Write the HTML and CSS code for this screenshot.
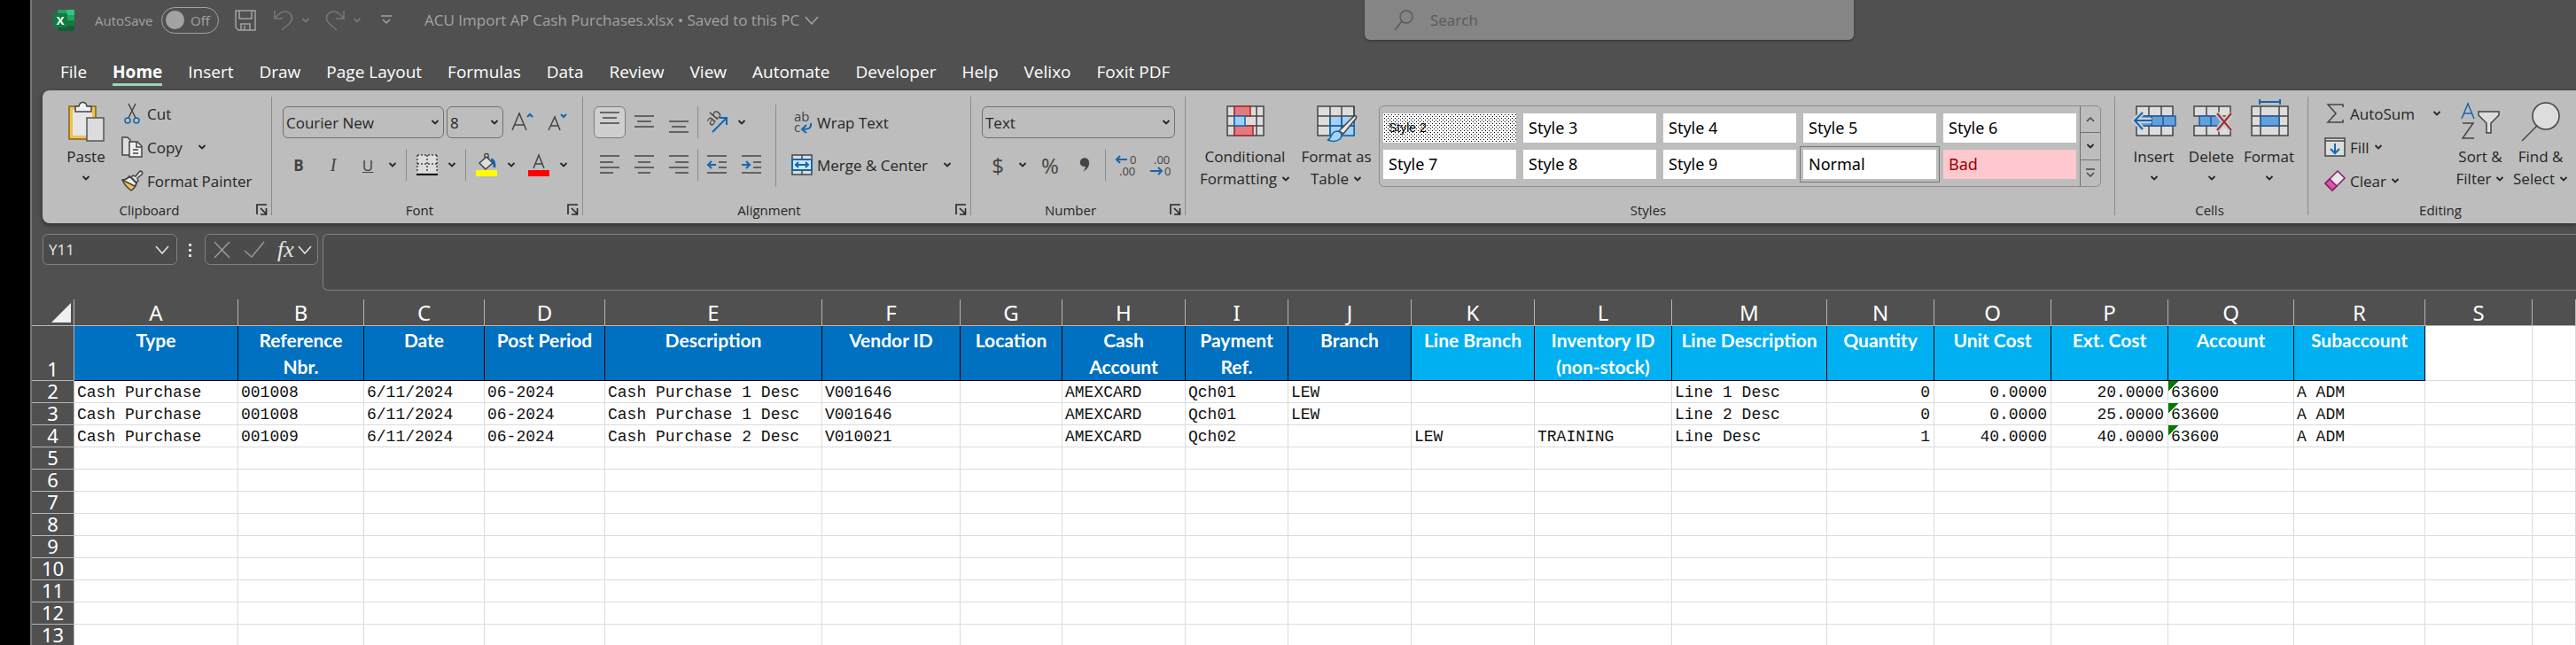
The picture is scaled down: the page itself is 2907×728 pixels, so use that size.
FILE: index.html
```html
<!DOCTYPE html>
<html lang="en">
<head>
    <meta charset="UTF-8">
    <meta name="viewport" content="width=device-width, initial-scale=1.0">
    <title>ACU Import AP Cash Purchases.xlsx</title>
    <link rel="stylesheet" href="styles.css">
</head>
<body>
    <!-- shared icons -->
    <svg class="defs" width="0" height="0">
        <symbol id="caret" viewBox="0 0 10 6"><path d="M1.5 1 5 4.5 8.5 1" fill="none" stroke="currentColor" stroke-width="1.8"/></symbol>
        <symbol id="chevron" viewBox="0 0 16 10"><path d="M1 1l7 8 7-8" fill="none" stroke="currentColor" stroke-width="1.5"/></symbol>
        <symbol id="launcher" viewBox="0 0 13 13"><path d="M1 12V1h11M5 5l6 6M11.500 5v7H5" fill="none" stroke="currentColor" stroke-width="1.6"/></symbol>
    </svg>

    <div class="app">
        <header class="titlebar">
            <div class="title-left">
                <svg class="logo" width="24" height="24" viewBox="0 0 24 24">
                    <path fill="#21a366" d="M5 0h10v6H5z"/><path fill="#33c481" d="M15 0h9v6h-9z"/>
                    <path fill="#107c41" d="M5 6h10v6H5z"/><path fill="#21a366" d="M15 6h9v6h-9z"/>
                    <path fill="#185c37" d="M5 12h10v12H5z"/><path fill="#107c41" d="M15 12h9v6h-9z"/><path fill="#185c37" d="M15 18h9v6h-9z"/>
                    <rect y="4" width="16" height="16" rx="1" fill="#107c41"/>
                    <text x="8" y="17" text-anchor="middle" font-size="13" font-weight="bold" fill="#fff">X</text>
                </svg>
                <label class="autosave" for="autosave">AutoSave</label>
                <span class="toggle"><input type="checkbox" id="autosave"><span>Off</span></span>
                <button class="qat save" title="Save">
                    <svg width="24" height="24" viewBox="0 0 24 24"><path d="M1 1h22v22H4l-3-3zM5 1v9h14V1M7 23v-7h10v7M11 18v5"/></svg>
                </button>
                <button class="qat dim" title="Undo">
                    <svg width="24" height="24" viewBox="0 0 24 24"><path d="M2 1v9h9M2 10C8 2 14 0 19 4c5 5 2 9-1 12l-8 7"/></svg>
                    <svg width="10" height="6"><use href="#caret"/></svg>
                </button>
                <button class="qat dim" title="Redo">
                    <svg width="24" height="24" viewBox="0 0 24 24"><path d="M22 1v9h-9M22 10C16 2 10 0 5 4c-5 5-2 9 1 12l8 7"/></svg>
                    <svg width="10" height="6"><use href="#caret"/></svg>
                </button>
                <button class="qat" title="Customize Quick Access Toolbar">
                    <svg width="12" height="12" viewBox="0 0 12 12"><path d="M0 1h12M2 5l4 4 4-4"/></svg>
                </button>
                <span class="doc-title">ACU Import AP Cash Purchases.xlsx • Saved to this PC <svg width="16" height="10"><use href="#chevron"/></svg></span>
            </div>
            <div class="search">
                <svg width="22" height="24" viewBox="0 0 22 24"><circle cx="14" cy="8" r="7"/><path d="M9 13l-8 10"/></svg>
                <input type="text" placeholder="Search" aria-label="Search">
            </div>
        </header>

        <nav class="tabs">
            <a href="#">File</a>
            <a href="#" class="active">Home</a>
            <a href="#">Insert</a>
            <a href="#">Draw</a>
            <a href="#">Page Layout</a>
            <a href="#">Formulas</a>
            <a href="#">Data</a>
            <a href="#">Review</a>
            <a href="#">View</a>
            <a href="#">Automate</a>
            <a href="#">Developer</a>
            <a href="#">Help</a>
            <a href="#">Velixo</a>
            <a href="#">Foxit PDF</a>
        </nav>

        <div class="ribbon">
            <section class="group clipboard">
                <div class="group-body">
                    <button class="big">
                        <svg width="44" height="46" viewBox="0 0 44 46">
                            <path d="M3 6h30v37H3z" fill="#f2c04f" stroke="#8a6410" stroke-width="1.5"/><path d="M7 10h22v29H7z" fill="#e6e6e6" stroke="none"/>
                            <path d="M10 12V6h4c1-6 8-6 9 0h5v6z" fill="#f0f0f0"/><path d="M23 19h19v26H23z" fill="#dcdcdc" stroke="#555"/>
                        </svg>
                        <span>Paste</span>
                        <svg class="caret" width="10" height="6"><use href="#caret"/></svg>
                    </button>
                    <div class="stack">
                        <button class="line">
                            <svg width="24" height="24" viewBox="0 0 24 24"><path d="M8 1l8 16M16 1L8 17"/><g stroke="#1267b0"><circle cx="7" cy="20" r="3"/><circle cx="17" cy="20" r="3"/></g></svg>
                            <span>Cut</span>
                        </button>
                        <button class="line">
                            <svg width="24" height="24" viewBox="0 0 24 24"><path d="M1 1h6l3 3v17H1z" fill="#ddd"/><path d="M9 6h9l5 5v12H9z" fill="#eee"/><path d="M17 6v6h6M13 15h6M13 19h6"/></svg>
                            <span>Copy</span>
                            <svg class="caret gap" width="10" height="6"><use href="#caret"/></svg>
                        </button>
                        <button class="line">
                            <svg width="24" height="24" viewBox="0 0 24 24"><path d="M1 11c4 0 6-1 8-4l8 8c-1 4-3 6-6 8-4-3-8-7-10-12z" fill="#f2c04f"/><path d="M1 11c4 0 6-1 8-4l8 8c-1 1-1 2-2 3z" fill="#eee"/><path d="M11 8l2-2 3 1 4-5c2-2 5 0 3 3l-5 4 1 3-2 2z" fill="#ddd"/></svg>
                            <span>Format Painter</span>
                        </button>
                    </div>
                </div>
                <footer><span>Clipboard</span><button title="Clipboard settings"><svg width="13" height="13"><use href="#launcher"/></svg></button></footer>
            </section>

            <section class="group font">
                <div class="group-body rows">
                    <div class="row">
                        <div class="combo name"><select aria-label="Font"><option>Courier New</option></select><svg width="10" height="6"><use href="#caret"/></svg></div>
                        <div class="combo size"><select aria-label="Font size"><option>8</option></select><svg width="10" height="6"><use href="#caret"/></svg></div>
                        <button class="tool" title="Increase font size"><svg width="26" height="26" viewBox="0 0 26 26"><path d="M2 22L10 3l8 19M5 16h10"/><path d="M19 7l3-3 3 3" stroke="#1267b0" stroke-width="2"/></svg></button>
                        <button class="tool" title="Decrease font size"><svg width="26" height="26" viewBox="0 0 26 26"><path d="M4 22l7-15 6 15M6 17h9"/><path d="M18 4l3 3 3-3" stroke="#1267b0" stroke-width="2"/></svg></button>
                    </div>
                    <div class="row">
                        <button class="tool letter"><b>B</b></button>
                        <button class="tool letter"><i>I</i></button>
                        <button class="tool letter"><u>U</u></button>
                        <button class="drop" aria-label="Underline options"><svg width="10" height="6"><use href="#caret"/></svg></button>
                        <span class="sep"></span>
                        <button class="tool" title="Borders"><svg width="24" height="24" viewBox="0 0 24 24"><path d="M1 1h22v20H1z" fill="#ddd" stroke="none"/><path d="M1 1h22M1 11h22M1 1v20M12 1v20M23 1v20" stroke-dasharray="2 2"/><path d="M0 23h24" stroke="#111" stroke-width="2"/></svg></button>
                        <button class="drop" aria-label="Border options"><svg width="10" height="6"><use href="#caret"/></svg></button>
                        <span class="sep"></span>
                        <button class="tool" title="Fill color"><svg width="24" height="26" viewBox="0 0 24 26"><path d="M4 11l8-7 7 7-8 7zM10 6V2c0-2 4-2 4 0v5" fill="#ddd"/><path d="M17 7c4 1 4 5 4 9" stroke="#1267b0" stroke-width="3"/><path d="M0 19h24v7H0z" fill="#ff0" stroke="none"/></svg></button>
                        <button class="drop" aria-label="Fill options"><svg width="10" height="6"><use href="#caret"/></svg></button>
                        <button class="tool" title="Font color"><svg width="24" height="26" viewBox="0 0 24 26"><path d="M6 17l6-15 6 15M8 12h8"/><path d="M0 19h24v7H0z" fill="#f00" stroke="none"/></svg></button>
                        <button class="drop" aria-label="Font color options"><svg width="10" height="6"><use href="#caret"/></svg></button>
                    </div>
                </div>
                <footer><span>Font</span><button title="Font settings"><svg width="13" height="13"><use href="#launcher"/></svg></button></footer>
            </section>

            <section class="group alignment">
                <div class="group-body">
                    <div class="rows">
                        <div class="row">
                            <button class="tool on" title="Top align"><svg width="22" height="24" viewBox="0 0 22 24"><path d="M0 1h22M3 7h16M0 13h22"/></svg></button>
                            <button class="tool" title="Middle align"><svg width="22" height="24" viewBox="0 0 22 24"><path d="M0 5h22M3 11h16M0 17h22"/></svg></button>
                            <button class="tool" title="Bottom align"><svg width="22" height="24" viewBox="0 0 22 24"><path d="M0 11h22M3 17h16M0 23h22"/></svg></button>
                            <span class="sep"></span>
                            <button class="tool" title="Orientation"><svg width="26" height="26" viewBox="0 0 26 26"><text transform="translate(7 18) rotate(-50)" font-size="16">ab</text><path d="M8 24L24 8M16 8h8v8" stroke="#1267b0" stroke-width="2"/></svg></button>
                            <button class="drop" aria-label="Orientation options"><svg width="10" height="6"><use href="#caret"/></svg></button>
                        </div>
                        <div class="row">
                            <button class="tool" title="Align left"><svg width="22" height="22" viewBox="0 0 22 22"><path d="M0 1h22M0 8h15M0 14h22M0 20h15"/></svg></button>
                            <button class="tool" title="Center"><svg width="22" height="22" viewBox="0 0 22 22"><path d="M0 1h22M4 8h14M0 14h22M4 20h14"/></svg></button>
                            <button class="tool" title="Align right"><svg width="22" height="22" viewBox="0 0 22 22"><path d="M0 1h22M7 8h15M0 14h22M7 20h15"/></svg></button>
                            <span class="sep"></span>
                            <button class="tool" title="Decrease indent"><svg width="22" height="22" viewBox="0 0 22 22"><path d="M0 1h22M13 8h9M13 14h9M0 20h22"/><path d="M10 11H1M5 7l-4 4 4 4" stroke="#1267b0" stroke-width="2"/></svg></button>
                            <button class="tool" title="Increase indent"><svg width="22" height="22" viewBox="0 0 22 22"><path d="M0 1h22M13 8h9M13 14h9M0 20h22"/><path d="M0 11h9M5 7l4 4-4 4" stroke="#1267b0" stroke-width="2"/></svg></button>
                        </div>
                    </div>
                    <span class="sep tall"></span>
                    <div class="rows wide">
                        <button class="line">
                            <svg width="24" height="26" viewBox="0 0 24 26"><text x="3" y="12" font-size="15">ab</text><text x="3" y="24" font-size="15">c</text><path d="M22 14c1 6-3 7-9 7M17 16l-5 5 5 4" stroke="#1267b0" stroke-width="2"/></svg>
                            <span>Wrap Text</span>
                        </button>
                        <button class="line">
                            <svg width="24" height="24" viewBox="0 0 24 24"><path d="M1 1h22v22H1zM12 1v5M12 18v5" fill="#ddd"/><path d="M1 6h22v12H1z" fill="#cfe6f8" stroke="#1267b0" stroke-width="2"/><path d="M5 12h14M8 9l-3 3 3 3M16 9l3 3-3 3" stroke="#1267b0" stroke-width="2"/></svg>
                            <span>Merge &amp; Center</span>
                            <svg class="caret gap" width="10" height="6"><use href="#caret"/></svg>
                        </button>
                    </div>
                </div>
                <footer><span>Alignment</span><button title="Alignment settings"><svg width="13" height="13"><use href="#launcher"/></svg></button></footer>
            </section>

            <section class="group number">
                <div class="group-body rows">
                    <div class="row">
                        <div class="combo format"><select aria-label="Number format"><option>Text</option></select><svg width="10" height="6"><use href="#caret"/></svg></div>
                    </div>
                    <div class="row">
                        <button class="tool symbol">$</button>
                        <button class="drop" aria-label="Currency options"><svg width="10" height="6"><use href="#caret"/></svg></button>
                        <button class="tool symbol">%</button>
                        <button class="tool" title="Comma style"><svg width="12" height="20" viewBox="0 0 14 20"><path d="M7 1c4 0 6 3 6 7 0 5-4 9-8 11 2-3 3-5 3-7-4 1-7-2-7-5 0-4 3-6 6-6z" fill="#444" stroke="none"/></svg></button>
                        <span class="sep"></span>
                        <button class="tool" title="Increase decimal"><svg width="24" height="26" viewBox="0 0 24 26"><text x="16" y="12" font-size="13">0</text><text x="4" y="25" font-size="13">.00</text><path d="M13 7H1M5 3L1 7l4 4" stroke="#1267b0" stroke-width="2"/></svg></button>
                        <button class="tool" title="Decrease decimal"><svg width="24" height="26" viewBox="0 0 24 26"><text x="4" y="12" font-size="13">.00</text><text x="16" y="25" font-size="13">0</text><path d="M0 20h13M9 16l4 4-4 4" stroke="#1267b0" stroke-width="2"/></svg></button>
                    </div>
                </div>
                <footer><span>Number</span><button title="Number settings"><svg width="13" height="13"><use href="#launcher"/></svg></button></footer>
            </section>

            <section class="group styles">
                <div class="group-body">
                    <button class="big conditional">
                        <svg width="44" height="46" viewBox="0 0 44 46">
                            <path d="M2 6h41v33H2z" fill="#ddd"/><path d="M2 17h41M2 28h41M10 6v33M35 6v33"/>
                            <path d="M10 6h18v11H10zM10 28h21v11H10z" fill="#e47a80" stroke="#a02c32"/><path d="M10 17h12v11H10z" fill="#9fd0f5" stroke="#1267b0"/>
                        </svg>
                        <span>Conditional</span>
                        <span>Formatting <svg width="10" height="6"><use href="#caret"/></svg></span>
                    </button>
                    <button class="big format-as">
                        <svg width="48" height="46" viewBox="0 0 48 46">
                            <path d="M3 6h41v33H3z" fill="#ddd"/><path d="M17 17h27v22H17z" fill="#a4d2f5" stroke="none"/><path d="M3 17h41M3 28h41M17 6v33M30 6v33M44 6v11"/><path d="M44 17v22H17V17M17 28h27M30 17v22" stroke="#1267b0"/>
                            <path d="M27 34L44 17c3-1 3 1 2 3L32 37z" fill="#e8e8e8"/><path d="M14 44c5 0 3-10 11-10 6 1 6 6 3 9-4 3-9 3-14 1z" fill="#a4d2f5" stroke="#1267b0"/>
                        </svg>
                        <span>Format as</span>
                        <span>Table <svg width="10" height="6"><use href="#caret"/></svg></span>
                    </button>
                    <div class="gallery">
                        <div class="style-grid">
                            <button class="dotted">Style 2</button>
                            <button>Style 3</button>
                            <button>Style 4</button>
                            <button>Style 5</button>
                            <button>Style 6</button>
                            <button>Style 7</button>
                            <button>Style 8</button>
                            <button>Style 9</button>
                            <button class="selected">Normal</button>
                            <button class="bad">Bad</button>
                        </div>
                        <div class="gallery-nav">
                            <button aria-label="Previous styles"><svg width="10" height="6" viewBox="0 0 10 6"><path d="M1 5l4-4 4 4"/></svg></button>
                            <button aria-label="Next styles"><svg width="10" height="6"><use href="#caret"/></svg></button>
                            <button aria-label="More styles"><svg width="10" height="11" viewBox="0 0 10 11"><path d="M0 1h10M1 5l4 4 4-4"/></svg></button>
                        </div>
                    </div>
                </div>
                <footer><span>Styles</span></footer>
            </section>

            <section class="group cells">
                <div class="group-body">
                    <button class="big">
                        <svg width="48" height="46" viewBox="0 0 48 46">
                            <path d="M4 6h41v33H4zM4 17h41M4 28h41M18 6v33M32 6v33" fill="#ddd"/><path d="M8 17h40v11H8zM34 17v11M21 17v11" fill="#5fa3d9" stroke="#2a55a5"/>
                            <path d="M21 22H2M11 13l-9 9 9 10" stroke="#cfcfcf" stroke-width="6"/><path d="M21 22H2M11 13l-9 9 9 10" stroke="#1267b0" stroke-width="2"/>
                        </svg>
                        <span>Insert</span>
                        <svg class="caret" width="10" height="6"><use href="#caret"/></svg>
                    </button>
                    <button class="big">
                        <svg width="48" height="46" viewBox="0 0 48 46">
                            <path d="M4 6h41v11H4zM4 28h41v11H4zM18 6v11M32 6v11M18 28v11M32 28v11" fill="#ddd"/><path d="M10 17h22l5 5-5 6H10zM23 17v11" fill="#5fa3d9" stroke="#2a55a5"/>
                            <path d="M30 14l16 19M46 14L30 33" stroke="#ccc" stroke-width="6"/><path d="M30 14l16 19M46 14L30 33" stroke="#a02c32" stroke-width="2"/>
                        </svg>
                        <span>Delete</span>
                        <svg class="caret" width="10" height="6"><use href="#caret"/></svg>
                    </button>
                    <button class="big">
                        <svg width="48" height="46" viewBox="0 0 48 46">
                            <path d="M4 6h41v33H4zM4 17h41M4 28h41M14 6v33M35 6v33" fill="#ddd"/><path d="M14 17h21v11H14z" fill="#5fa3d9" stroke="#2a55a5"/>
                            <path d="M13 1h23M13-2v6M36-2v6" stroke="#1267b0" stroke-width="2"/>
                        </svg>
                        <span>Format</span>
                        <svg class="caret" width="10" height="6"><use href="#caret"/></svg>
                    </button>
                </div>
                <footer><span>Cells</span></footer>
            </section>

            <section class="group editing">
                <div class="group-body">
                    <div class="stack">
                        <button class="line">
                            <svg width="24" height="24" viewBox="0 0 24 24"><path d="M21 5V2H4l9 10-9 10h17v-3"/></svg>
                            <span>AutoSum</span>
                            <svg class="caret gap" width="10" height="6"><use href="#caret"/></svg>
                        </button>
                        <button class="line">
                            <svg width="24" height="24" viewBox="0 0 24 24"><path d="M1 2h22v20H1zM1 5h22" fill="#ddd"/><path d="M12 8v11M7 14l5 5 5-5" stroke="#1267b0" stroke-width="2"/></svg>
                            <span>Fill</span>
                            <svg class="caret" width="10" height="6"><use href="#caret"/></svg>
                        </button>
                        <button class="line">
                            <svg width="24" height="24" viewBox="0 0 24 24"><path d="M15 1l8 8-14 14-8-8z" fill="#e8e8e8" stroke="#8a1a66"/><path d="M6 10l8 8-5 5-8-8z" fill="#d954ab" stroke="#8a1a66"/></svg>
                            <span>Clear</span>
                            <svg class="caret" width="10" height="6"><use href="#caret"/></svg>
                        </button>
                    </div>
                    <button class="big sort">
                        <svg width="44" height="46" viewBox="0 0 44 46">
                            <path d="M1 20L8 3l7 17M4 14h8" stroke="#1267b0"/><path d="M2 25h12L2 42h13"/><path d="M20 12h23v4l-9 9v11h-5V25l-9-9z" fill="#ddd"/>
                        </svg>
                        <span>Sort &amp;</span>
                        <span>Filter <svg width="10" height="6"><use href="#caret"/></svg></span>
                    </button>
                    <button class="big find">
                        <svg width="44" height="46" viewBox="0 0 44 46"><circle cx="28" cy="17" r="15" fill="#ddd"/><path d="M18 28L1 45"/></svg>
                        <span>Find &amp;</span>
                        <span>Select <svg width="10" height="6"><use href="#caret"/></svg></span>
                    </button>
                </div>
                <footer><span>Editing</span></footer>
            </section>
        </div>

        <div class="formula-bar">
            <div class="name-box">
                <input type="text" value="Y11" aria-label="Name box">
                <svg width="16" height="10"><use href="#chevron"/></svg>
            </div>
            <svg class="dots" width="4" height="16" viewBox="0 0 4 16"><path d="M0 0h3v3H0zM0 6h3v3H0zM0 12h3v3H0z"/></svg>
            <div class="fx-box">
                <button title="Cancel"><svg width="20" height="20" viewBox="0 0 20 20"><path d="M1 1l17 18M18 1L1 19"/></svg></button>
                <button title="Enter"><svg width="24" height="20" viewBox="0 0 24 20"><path d="M1 11l8 7L23 1"/></svg></button>
                <button class="fx" title="Insert function">fx</button>
                <svg width="16" height="10"><use href="#chevron"/></svg>
            </div>
            <textarea class="formula" aria-label="Formula"></textarea>
        </div>

        <main class="sheet">
            <table>
                <colgroup id="cols"></colgroup>
                <thead><tr id="letters"></tr></thead>
                <tbody id="rows"></tbody>
            </table>
        </main>
    </div>

    <script>
        const columns = [
            ['A', 185, 'Type'], ['B', 142, 'Reference<br>Nbr.'], ['C', 136, 'Date'], ['D', 136, 'Post Period'],
            ['E', 245, 'Description'], ['F', 156, 'Vendor ID'], ['G', 115, 'Location'], ['H', 139, 'Cash<br>Account'],
            ['I', 116, 'Payment<br>Ref.'], ['J', 139, 'Branch'], ['K', 139, 'Line Branch'], ['L', 155, 'Inventory ID<br>(non-stock)'],
            ['M', 175, 'Line Description'], ['N', 121, 'Quantity'], ['O', 132, 'Unit Cost'], ['P', 132, 'Ext. Cost'],
            ['Q', 142, 'Account'], ['R', 148, 'Subaccount'], ['S', 121, ''], ['', 0, '']
        ];
        const data = [
            ['Cash Purchase', '001008', '6/11/2024', '06-2024', 'Cash Purchase 1 Desc', 'V001646', '', 'AMEXCARD', 'Qch01', 'LEW', '', '', 'Line 1 Desc', '0', '0.0000', '20.0000', '63600', 'A ADM'],
            ['Cash Purchase', '001008', '6/11/2024', '06-2024', 'Cash Purchase 1 Desc', 'V001646', '', 'AMEXCARD', 'Qch01', 'LEW', '', '', 'Line 2 Desc', '0', '0.0000', '25.0000', '63600', 'A ADM'],
            ['Cash Purchase', '001009', '6/11/2024', '06-2024', 'Cash Purchase 2 Desc', 'V010021', '', 'AMEXCARD', 'Qch02', '', 'LEW', 'TRAINING', 'Line Desc', '1', '40.0000', '40.0000', '63600', 'A ADM']
        ];

        document.getElementById('cols').innerHTML = '<col style="width:48px">' +
            columns.map(c => c[1] ? `<col style="width:${c[1]}px">` : '<col>').join('');
        document.getElementById('letters').innerHTML =
            '<th class="corner"><svg width="22" height="22"><path d="M22 0v22H0z"/></svg></th>' +
            columns.map(c => `<th>${c[0]}</th>`).join('');

        let html = '<tr class="headings"><th>1</th>' + columns.map((c, i) => {
            const cls = i < 10 ? 'doc' : i < 18 ? 'detail' : '';
            return `<td class="${cls}">${c[2]}</td>`;
        }).join('') + '</tr>';

        for (let r = 2; r <= 13; r++) {
            const row = data[r - 2] || [];
            html += `<tr><th>${r}</th>` + columns.map((c, i) => {
                let cls = '';
                if (i >= 13 && i <= 15) cls = 'num';
                if (i === 16 && row[i]) cls = 'flag';
                return `<td class="${cls}">${row[i] || ''}</td>`;
            }).join('') + '</tr>';
        }
        document.getElementById('rows').innerHTML = html;
    </script>
</body>
</html>
```
FILE: styles.css
```css
* {
    box-sizing: border-box;
}
body {
    margin: 0;
    background: #000;
    color: #262626;
    font-family: "Open Sans", "Noto Sans", sans-serif;
    font-size: 17px;
}
button, input, select, textarea {
    margin: 0;
    padding: 0;
    border: none;
    background: none;
    color: inherit;
    font: inherit;
}
svg {
    display: block;
    flex: none;
    overflow: visible;
    fill: none;
    stroke: #444;
    stroke-width: 1.5;
}
svg text {
    fill: #444;
    stroke: none;
}
use {
    stroke: none;
}
.defs {
    position: absolute;
}
.app {
    display: flex;
    flex-direction: column;
    height: 100vh;
    margin-left: 34px;
    border-left: 2px solid #777;
    background: #505050;
    overflow: hidden;
}

/* title bar */
.titlebar {
    display: flex;
    flex: none;
    height: 45px;
    color: #a3a3a3;
}
.title-left {
    display: flex;
    align-items: center;
    width: 1504px;
    padding-left: 24px;
    font-size: 15px;
    white-space: nowrap;
}
.titlebar svg {
    stroke: currentColor;
}
.titlebar .logo {
    stroke: none;
}
.logo text {
    fill: #fff;
}
.autosave {
    width: 75px;
    margin-left: 23px;
}
.toggle {
    display: flex;
    align-items: center;
    gap: 7px;
    width: 65px;
    height: 30px;
    padding-left: 4px;
    border: 1px solid #a3a3a3;
    border-radius: 15px;
}
.toggle input {
    appearance: none;
    width: 21px;
    height: 21px;
    border-radius: 50%;
    background: #a3a3a3;
}
.qat {
    display: flex;
    align-items: center;
    gap: 8px;
    margin-left: 18px;
}
.qat.dim {
    margin-left: 16px;
    color: #777;
}
.save + .qat.dim {
    margin-left: 19px;
}
.qat:last-of-type {
    margin-left: 22px;
}
.doc-title {
    display: flex;
    align-items: center;
    gap: 6px;
    margin-left: 37px;
    font-size: 17px;
}
.search {
    display: flex;
    align-items: center;
    gap: 19px;
    width: 552px;
    padding-left: 33px;
    border-radius: 0 0 6px 6px;
    background: #858585;
    box-shadow: 0 1px 3px #333;
    color: #5a5a5a;
}
.search input {
    flex: 1;
}
.search input::placeholder {
    color: #5a5a5a;
}

/* tabs */
.tabs {
    display: flex;
    flex: none;
    gap: 29px;
    height: 57px;
    padding: 23px 0 0 32px;
    font-size: 19px;
    line-height: 26px;
}
.tabs a {
    height: 29px;
    color: #fff;
    text-decoration: none;
    white-space: nowrap;
}
.tabs .active {
    border-bottom: 3px solid #9fd5b7;
    font-weight: bold;
}

/* ribbon */
.ribbon {
    display: flex;
    flex: none;
    height: 150px;
    margin-left: 12px;
    padding: 7px 0 9px;
    border-radius: 8px 0 0 8px;
    background: #bdbdbd;
    box-shadow: 0 2px 5px #2c2c2c;
    white-space: nowrap;
}
.group {
    display: flex;
    flex: none;
    flex-direction: column;
    border-right: 1px solid #8c8c8c;
}
.group-body {
    display: flex;
    flex: 1;
}
.group footer {
    display: flex;
    align-items: center;
    height: 13px;
    padding-right: 4px;
    font-size: 15px;
    line-height: 12px;
}
.group footer span {
    flex: 1;
    text-align: center;
}
.group footer button {
    width: 13px;
    color: #262626;
}
.clipboard { width: 259px; }
.font { width: 351px; }
.alignment { width: 438px; }
.number { width: 242px; }
.styles { flex: 1; }
.cells { width: 218px; }
.editing { width: 302px; border-right: none; }

.stack {
    display: flex;
    flex-direction: column;
}
.line {
    display: flex;
    align-items: center;
    gap: 5px;
    height: 38px;
}
.line .gap {
    margin-left: 12px;
}
.big {
    display: flex;
    flex-direction: column;
    align-items: center;
    padding-top: 5px;
    line-height: 25px;
}
.big > svg:first-child {
    margin-bottom: 4px;
}
.big .caret {
    margin-top: 9px;
}
.big span {
    display: flex;
    align-items: center;
    gap: 5px;
}
.rows {
    display: flex;
    flex-direction: column;
    gap: 12px;
    padding: 11px 0 0 12px;
}
.row {
    display: flex;
    gap: 3px;
    height: 36px;
}
.combo {
    display: flex;
    align-items: center;
    padding: 0 4px 0 3px;
    border: 1px solid #707070;
    border-radius: 6px;
}
.combo select {
    flex: 1;
    min-width: 0;
    height: 100%;
    appearance: none;
}
.combo.name { width: 182px; }
.combo.size { width: 64px; }
.combo.format { width: 218px; }
.tool {
    display: flex;
    align-items: center;
    justify-content: center;
    width: 36px;
    height: 36px;
    color: #444;
}
.tool.on {
    border: 1px solid #7a7a7a;
    border-radius: 6px;
    background: #cfcfcf;
}
.letter {
    font-size: 17px;
}
.letter i {
    font-family: "Liberation Serif", serif;
    font-size: 20px;
}
.symbol {
    font-size: 24px;
}
.drop {
    display: flex;
    align-items: center;
    justify-content: center;
    width: 20px;
    margin-left: -3px;
}
.sep {
    width: 1px;
    margin: 0 2px;
    background: #8c8c8c;
}
.clipboard .big {
    width: 62px;
    margin: 0 9px 0 18px;
}
.alignment .sep {
    margin: 0;
}
.alignment .drop {
    width: 14px;
    margin: 0;
}
.alignment .tall {
    height: 93px;
    margin: 9px 0 0 9px;
}
.wide {
    padding-left: 17px;
}
.wide .line {
    height: 36px;
}

/* cell styles */
.conditional {
    width: 110px;
    margin-left: 12px;
}
.format-as {
    width: 96px;
}
.gallery {
    display: flex;
    flex: 1;
    height: 92px;
    margin: 10px 15px 0 0;
    border: 1px solid #8c8c8c;
    border-radius: 6px;
}
.style-grid {
    display: grid;
    flex: 1;
    grid-template-columns: repeat(5, 1fr);
    grid-auto-rows: 33px;
    gap: 8px;
    padding: 8px 4px;
}
.style-grid button {
    padding-left: 6px;
    background: #fff;
    color: #000;
    font-family: "Noto Sans", sans-serif;
    font-size: 18px;
    line-height: 31px;
    text-align: left;
}
.style-grid .dotted {
    background-image: conic-gradient(from 90deg at 3px 3px, #000 25%, transparent 25%), conic-gradient(from 90deg at 3px 3px, #000 25%, transparent 25%);
    background-position: 0 0, 2px 2px;
    background-size: 4px 4px;
    font-family: "Liberation Sans", sans-serif;
    font-size: 14px;
}
.style-grid .selected {
    outline: 1px solid #777;
    outline-offset: 3px;
}
.style-grid .bad {
    background: #ffc7ce;
    color: #9c0006;
}
.gallery-nav {
    display: flex;
    flex-direction: column;
    width: 23px;
    border-left: 1px solid #707070;
}
.gallery-nav button {
    display: flex;
    flex: 1;
    align-items: center;
    justify-content: center;
}
.gallery-nav button + button {
    border-top: 1px solid #707070;
}
.cells .group-body {
    padding-left: 11px;
}
.cells .big {
    width: 65px;
}
.editing .stack {
    width: 160px;
    padding-left: 18px;
}
.editing .stack .gap {
    margin-left: 15px;
}
.sort, .find {
    width: 68px;
}

/* formula bar */
.formula-bar {
    display: flex;
    flex: none;
    height: 86px;
    padding: 12px 0 0 12px;
    color: #e6e6e6;
}
.name-box, .fx-box {
    display: flex;
    align-items: center;
    height: 35px;
    border: 1px solid #808080;
    border-radius: 6px;
    background: #4b4b4b;
}
.name-box {
    width: 152px;
    padding: 0 8px 0 6px;
}
.name-box input {
    flex: 1;
    min-width: 0;
}
.formula-bar .dots {
    margin: 11px 14px 0 13px;
    fill: #ddd;
    stroke: none;
}
.fx-box {
    width: 128px;
    margin-right: 5px;
    padding-left: 9px;
    gap: 14px;
}
.fx-box button svg {
    stroke: #999;
}
.fx-box > svg {
    margin-left: -10px;
}
.fx {
    font-family: "Liberation Serif", serif;
    font-size: 26px;
    font-style: italic;
    line-height: 30px;
}
.formula {
    flex: 1;
    height: 64px;
    border: 1px solid #808080;
    border-right: none;
    border-radius: 6px 0 0 6px;
    background: #4b4b4b;
    resize: none;
}

/* sheet */
.sheet {
    flex: 1;
    min-height: 0;
    overflow: hidden;
}
table {
    width: 100%;
    border-spacing: 0;
    table-layout: fixed;
}
th {
    height: 25px;
    padding: 0;
    border-right: 1px solid #b5b5b5;
    border-bottom: 1px solid #b5b5b5;
    background: #505050;
    color: #fff;
    font-family: "Noto Sans", sans-serif;
    font-size: 22px;
    font-weight: normal;
    line-height: 22px;
    vertical-align: top;
}
thead th {
    height: 30px;
    font-size: 24px;
    line-height: 29px;
}
.corner svg {
    margin: 4px 3px 0 auto;
    fill: #f0f0f0;
    stroke: none;
}
td {
    height: 25px;
    padding: 2px 4px 0 3px;
    border-right: 1px solid #dcdcdc;
    border-bottom: 1px solid #dcdcdc;
    background-color: #fff;
    color: #111;
    font-family: "Liberation Mono", monospace;
    font-size: 18px;
    line-height: 22px;
    white-space: nowrap;
}
.headings th {
    padding-bottom: 2px;
    vertical-align: bottom;
}
.headings td {
    height: 62px;
    padding: 1px 0 0;
    font-family: Lato, sans-serif;
    font-size: 21px;
    font-weight: bold;
    line-height: 30px;
    text-align: center;
    vertical-align: top;
}
.headings .doc, .headings .detail {
    border-color: #000;
    background-color: #0070c0;
    color: #fff;
}
.headings .detail {
    background-color: #00b0f0;
}
.num {
    text-align: right;
}
.flag {
    background-image: linear-gradient(135deg, #007a00 50%, transparent 50%);
    background-repeat: no-repeat;
    background-size: 11px 11px;
}
```
